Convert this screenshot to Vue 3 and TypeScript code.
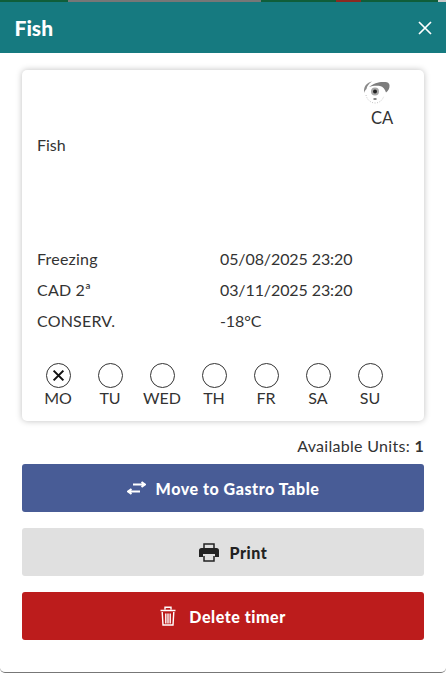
<script setup lang="ts">
const days = ['MO', 'TU', 'WED', 'TH', 'FR', 'SA', 'SU']
const rows = [
  { label: 'Freezing', value: '05/08/2025 23:20' },
  { label: 'CAD 2ª', value: '03/11/2025 23:20' },
  { label: 'CONSERV.', value: '-18°C' },
]
</script>

<template>
  <div class="page">
    <div class="strip">
      <i class="s1"></i><i class="s2"></i><i class="s3"></i><i class="s4"></i><i class="s5"></i><i class="s6"></i>
    </div>
    <div class="modal">
      <header class="head">
        <h1>Fish</h1>
        <svg class="close" viewBox="0 0 14 14" width="14" height="14"><path d="M1 1l12 12M13 1L1 13" stroke="#fff" stroke-width="1.7" fill="none"/></svg>
      </header>
      <div class="body">
        <section class="card">
          <div class="badge">
            <svg width="28" height="26" viewBox="0 0 28 26">
              <path d="M1 11C1 6 4 2.500 9 1.500 6 3.500 4 6 3.500 9 2.500 10 1.500 11 1 13z" fill="#8a8a8a"/>
              <path d="M6 7c4-3.500 11-5.500 15-5 3-.5 5 .5 5.500 3 .3 3-1 6-3.500 7.500-1-3-3-6-6-6.500-4-.7-8 0-11 1z" fill="#7d7d7d"/>
              <circle cx="12" cy="11.500" r="4" fill="#a8a8a8"/>
              <circle cx="12" cy="11.500" r="2" fill="#222"/>
              <path d="M10.500 19h3" stroke="#111" stroke-width="1"/>
              <path d="M3 15c1 5 5 8 9 8s7-2 9-7" fill="none" stroke="#aaa" stroke-width=".7" stroke-dasharray="1 1.500"/>
            </svg>
            <span>CA</span>
          </div>
          <div class="name">Fish</div>
          <dl class="rows">
            <div v-for="r in rows" :key="r.label" class="row">
              <dt>{{ r.label }}</dt>
              <dd>{{ r.value }}</dd>
            </div>
          </dl>
          <div class="days">
            <div v-for="(d, i) in days" :key="d" class="day">
              <span class="dot">
                <svg v-if="i === 0" viewBox="0 0 12 12" width="13" height="13"><path d="M1.500 1.500l9 9M10.500 1.500l-9 9" stroke="#111" stroke-width="1.900" fill="none"/></svg>
              </span>
              <span class="dl">{{ d }}</span>
            </div>
          </div>
        </section>
        <div class="units">Available Units: <b>1</b></div>
        <button class="btn blue">
          <svg width="19" height="14" viewBox="0 0 19 14"><path d="M6 3.500h11M14.500 1L18 3.500 14.500 6M13 10.500H2M4.500 8L1 10.500 4.500 13" stroke="#fff" stroke-width="2" fill="none"/></svg>
          <span>Move to Gastro Table</span>
        </button>
        <button class="btn gray">
          <svg width="20" height="19" viewBox="0 0 20 19"><path d="M5 5V1h10v4M5 13v5h10v-5" fill="none" stroke="#222" stroke-width="1.500"/><path d="M2.500 5h15A2.500 2.500 0 0 1 20 7.500V14h-4v-3H4v3H0V7.500A2.500 2.500 0 0 1 2.500 5z" fill="#222"/></svg>
          <span>Print</span>
        </button>
        <button class="btn red">
          <svg width="16" height="20" viewBox="0 0 16 20"><path d="M.5 4.500h15M5 3.500V1.200h6v2.300M2.200 6l.8 13h10l.8-13M5.800 7.500v10M8 7.500v10M10.200 7.500v10" stroke="#fff" stroke-width="1.400" fill="none"/></svg>
          <span>Delete timer</span>
        </button>
      </div>
    </div>
  </div>
</template>

<style scoped>
.page { width: 446px; height: 673px; display: flex; flex-direction: column; overflow: hidden; font-family: Lato, "Open Sans", sans-serif; color: #333; }
.strip { height: 2px; display: flex; flex: none; }
.strip i { display: block; height: 100%; }
.s1 { width: 68px; background: #0f5e3a; }
.s2 { width: 193px; background: #777; }
.s3 { width: 75px; background: #0f5e3a; }
.s4 { width: 25px; background: #8a2a22; }
.s5 { width: 77px; background: #0f5e3a; }
.s6 { flex: 1; background: #c9c9c9; }
.modal { flex: 1; display: flex; flex-direction: column; background: #fff; border-bottom: 1px solid #777; border-radius: 0 0 5px 5px; }
.head { height: 51px; flex: none; background: #167a80; display: flex; align-items: center; justify-content: space-between; padding: 0 14px 0 14.500px; }
.head h1 { margin: 0; font-size: 21px; font-weight: 900; color: #fff; }
.close { display: block; }
.body { padding: 17px 22px 0; display: flex; flex-direction: column; }
.card { height: 351px; box-sizing: border-box; border-radius: 5px; box-shadow: 0 0 6px rgba(0,0,0,.25); padding: 10px 15px 0; display: flex; flex-direction: column; }
.badge { align-self: flex-end; width: 46px; display: flex; flex-direction: column; align-items: flex-start; font-size: 16.500px; line-height: 20px; }
.badge svg { display: block; margin-bottom: 2px; }
.badge span { margin-left: 8px; }
.name { margin-top: 7px; font-size: 16px; line-height: 20px; }
.rows { margin: 88px 0 0; }
.row { display: flex; height: 31px; align-items: center; font-size: 16px; }
.row dt { width: 183px; letter-spacing: .2px; }
.row dd { margin: 0; letter-spacing: -.1px; }
.days { margin-top: 27px; margin-left: -5px; display: flex; width: 364px; justify-content: space-between; }
.day { width: 52px; display: flex; flex-direction: column; align-items: center; font-size: 16px; line-height: 20px; }
.dot { width: 25px; height: 25px; box-sizing: border-box; border: 1px solid #333; border-radius: 50%; display: flex; align-items: center; justify-content: center; }
.units { text-align: right; margin-top: 15px; font-size: 16px; line-height: 20px; letter-spacing: .3px; }
.btn { height: 48px; border: 0; border-radius: 3px; display: flex; align-items: center; justify-content: center; gap: 10px; font-family: inherit; font-size: 16px; font-weight: 900; letter-spacing: .55px; margin-top: 16px; padding: 0; }
.btn.blue { margin-top: 8px; background: #485c96; color: #fff; }
.btn.gray { background: #e0e0e0; color: #222; padding-left: 20px; gap: 11px; }
.btn.red { background: #bc1c1c; color: #fff; gap: 13px; }
</style>
